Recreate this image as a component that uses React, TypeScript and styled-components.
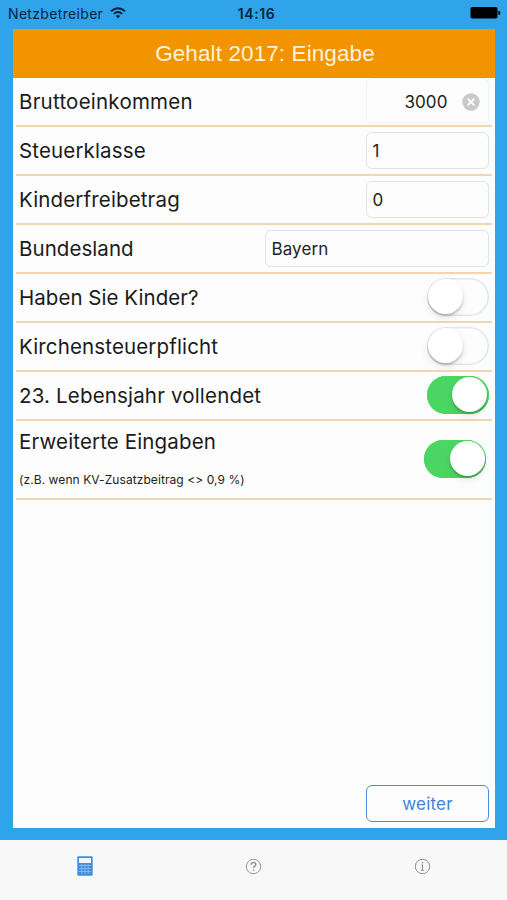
import React from "react";
import styled, { createGlobalStyle } from "styled-components";

const GlobalStyle = createGlobalStyle`
  * { box-sizing: border-box; }
  body { margin: 0; background: #2fa4eb; font-family: Inter, "Liberation Sans", sans-serif; }
`;

const Screen = styled.div`
  width: 507px;
  height: 900px;
  display: flex;
  flex-direction: column;
  background: #2fa4eb;
  overflow: hidden;
`;

const StatusBar = styled.header`
  height: 29px;
  flex: none;
  display: grid;
  grid-template-columns: 1fr auto 1fr;
  align-items: center;
  padding: 0 6px 2px 8px;
  font-size: 14px;
  color: #06233b;
`;

const Carrier = styled.div`
  display: flex;
  align-items: center;
  gap: 7px;
  letter-spacing: 0.33px;

  svg {
    margin-bottom: 2px;
  }
`;

const Clock = styled.div`
  font-weight: 600;
  font-size: 14px;
  letter-spacing: 0.6px;
  padding-left: 4px;
`;

const Battery = styled.svg`
  justify-self: end;
  margin-bottom: 1px;
`;

const Card = styled.main`
  flex: none;
  height: 799px;
  margin: 0 12px 0 13px;
  display: flex;
  flex-direction: column;
  background: #fdfdfd;
`;

const Title = styled.h1`
  margin: 0;
  height: 48.5px;
  flex: none;
  padding-left: 22px;
  text-align: center;
  font: 400 22.5px/49px "Liberation Sans", Arial, sans-serif;
  letter-spacing: 0.1px;
  background: #f19400;
  color: #fff3d6;
`;

const Row = styled.div<{ $height?: number; $end?: number }>`
  height: ${(p) => p.$height ?? 49}px;
  flex: none;
  margin: 0 3px;
  padding: 0 ${(p) => p.$end ?? 3}px 0 3px;
  border-bottom: 2px solid #f3d5af;
  display: flex;
  align-items: center;
  justify-content: space-between;
`;

const Label = styled.span<{ $track?: number }>`
  font-size: 20.5px;
  line-height: 27px;
  padding-top: 1px;
  color: #1b1b1b;
  white-space: nowrap;
  letter-spacing: ${(p) => p.$track ?? 0.14}px;
`;

const LabelStack = styled.div`
  height: 100%;
  padding-top: 6px;
  display: flex;
  flex-direction: column;
  gap: 17px;
`;

const Hint = styled.span`
  font-size: 12px;
  line-height: 16px;
  color: #222;
  letter-spacing: 0.08px;
  white-space: nowrap;
`;

const Field = styled.div<{ $width?: number }>`
  width: ${(p) => p.$width ?? 123}px;
  height: 37px;
  padding: 1px 0 0 5.5px;
  border: 1.5px solid #e3e0e7;
  border-radius: 6px;
  display: flex;
  align-items: center;
  font-size: 17px;
  letter-spacing: 0.1px;
  color: #222;
`;

const ActiveField = styled(Field)`
  height: 46px;
  border: 1px solid #f4f2f4;
  justify-content: flex-end;
  gap: 14.5px;
  padding-right: 8px;
`;

const Track = styled.div<{ $on: boolean }>`
  width: 62px;
  height: 38px;
  border-radius: 19px;
  padding: 1px 1.5px;
  display: flex;
  justify-content: ${(p) => (p.$on ? "flex-end" : "flex-start")};
  background: ${(p) => (p.$on ? "#4bd663" : "#fdfdfd")};
  box-shadow: inset 0 0 0 1.5px ${(p) => (p.$on ? "#4bd663" : "#e5e5e7")};
  margin-right: 0.5px;
`;

const Knob = styled.div`
  width: 35px;
  height: 35px;
  border-radius: 50%;
  background: #fff;
  box-shadow: 0 2px 2px rgba(0, 0, 0, 0.2), 0 4px 8px rgba(0, 0, 0, 0.09);
`;

const Actions = styled.div`
  margin-top: auto;
  padding: 0 6px 6px;
  display: flex;
  justify-content: flex-end;
`;

const NextButton = styled.button`
  width: 123px;
  height: 37px;
  padding: 1px 0 0;
  border: 1.5px solid #4a8bdc;
  border-radius: 6px;
  background: #fdfdfd;
  color: #3d84d6;
  font: 400 17px Inter, sans-serif;
  letter-spacing: 0.2px;
`;

const TabBar = styled.nav`
  margin-top: auto;
  height: 60px;
  flex: none;
  display: grid;
  grid-template-columns: repeat(3, 1fr);
  grid-template-rows: 20px;
  align-items: center;
  justify-items: center;
  padding-top: 16px;
  background: #f8f8f8;
`;

const WifiIcon = () => (
  <svg width="16" height="12" viewBox="0 0 16 12" fill="none" stroke="currentColor" strokeWidth="1.9">
    <path d="M1 4.2Q8-1.8 15 4.2" />
    <path d="M3.8 6.9Q8 3.3 12.2 6.9" />
    <path d="M5.7 8.9Q8 7 10.3 8.9L8 11.3Z" fill="currentColor" stroke="none" />
  </svg>
);

const ClearIcon = () => (
  <svg width="18" height="18" viewBox="0 0 18 18">
    <circle cx="9" cy="9" r="8.7" fill="#c9c9cb" />
    <path d="M5.7 5.7l6.6 6.6M12.3 5.7l-6.6 6.6" stroke="#fff" strokeWidth="1.8" />
  </svg>
);

const CalculatorIcon = () => (
  <svg width="16" height="20" viewBox="0 0 16 20">
    <rect x="0.3" y="0.3" width="15.4" height="19.4" rx="1" fill="#3f8ddc" />
    <rect x="2" y="2" width="12" height="5" fill="#f0f7ff" />
    <path d="M2 9.5h12M2 12.5h12M2 15.5h12M4.8 8v10M8 8v10M11.2 8v10" stroke="#8fc0ef" strokeWidth="0.8" />
  </svg>
);

const HelpIcon = () => (
  <svg width="17" height="17" viewBox="0 0 17 17" fill="none" stroke="#939393">
    <circle cx="8.5" cy="8.5" r="7.2" />
    <path d="M6.1 6.8Q6.2 4.6 8.5 4.6T10.8 6.6Q10.8 7.7 9.6 8.3Q8.5 8.9 8.5 10" strokeWidth="1.5" />
    <path d="M8.5 11.5v1.4" strokeWidth="1.4" />
  </svg>
);

const InfoIcon = () => (
  <svg width="17" height="17" viewBox="0 0 17 17" fill="none" stroke="#8e8e8e">
    <circle cx="8.5" cy="8.5" r="7.2" />
    <path d="M8.5 4v1.4" strokeWidth="1.4" />
    <path d="M7.2 7h1.3v5M6.9 12.2h3.2" strokeWidth="1.1" />
  </svg>
);

const Switch = ({ on = false }: { on?: boolean }) => (
  <Track $on={on} role="switch" aria-checked={on}>
    <Knob />
  </Track>
);

export default function App() {
  return (
    <>
      <GlobalStyle />
      <Screen>
        <StatusBar>
          <Carrier>
            Netzbetreiber <WifiIcon />
          </Carrier>
          <Clock>14:16</Clock>
          <Battery width="31" height="12" viewBox="0 0 31 12">
            <rect x="0.5" width="27" height="11.5" rx="1.8" fill="#000" />
            <path d="M28.4 3.8Q30.5 4.2 30.5 6T28.4 8Z" fill="#000" />
          </Battery>
        </StatusBar>
        <Card>
          <Title>Gehalt 2017: Eingabe</Title>
          <Row>
            <Label $track={0.23}>Bruttoeinkommen</Label>
            <ActiveField>
              3000 <ClearIcon />
            </ActiveField>
          </Row>
          <Row>
            <Label>Steuerklasse</Label>
            <Field>1</Field>
          </Row>
          <Row>
            <Label>Kinderfreibetrag</Label>
            <Field>0</Field>
          </Row>
          <Row>
            <Label $track={0.06}>Bundesland</Label>
            <Field $width={224}>Bayern</Field>
          </Row>
          <Row>
            <Label $track={0.04}>Haben Sie Kinder?</Label>
            <Switch />
          </Row>
          <Row>
            <Label>Kirchensteuerpflicht</Label>
            <Switch />
          </Row>
          <Row>
            <Label $track={0.17}>23. Lebensjahr vollendet</Label>
            <Switch on />
          </Row>
          <Row $height={79} $end={5.5}>
            <LabelStack>
              <Label>Erweiterte Eingaben</Label>
              <Hint>(z.B. wenn KV-Zusatzbeitrag &lt;&gt; 0,9 %)</Hint>
            </LabelStack>
            <Switch on />
          </Row>
          <Actions>
            <NextButton>weiter</NextButton>
          </Actions>
        </Card>
        <TabBar>
          <CalculatorIcon />
          <HelpIcon />
          <InfoIcon />
        </TabBar>
      </Screen>
    </>
  );
}
